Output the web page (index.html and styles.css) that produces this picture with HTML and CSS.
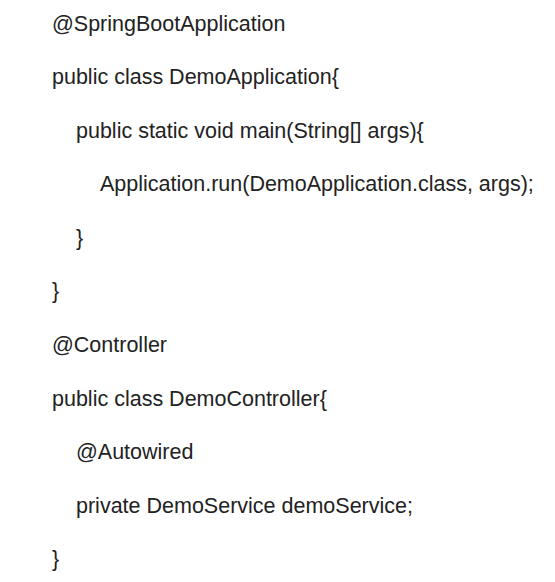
FILE: index.html
```html
<!DOCTYPE html>
<html>
<head>
<meta charset="utf-8">
<link rel="stylesheet" href="styles.css">
</head>
<body>
<div class="code">
  <p class="line l0">@SpringBootApplication</p>
  <p class="line l0">public class DemoApplication{</p>
  <p class="line l1">public static void main(String[] args){</p>
  <p class="line l2">Application.run(DemoApplication.class, args);</p>
  <p class="line l1">}</p>
  <p class="line l0">}</p>
  <p class="line l0">@Controller</p>
  <p class="line l0">public class DemoController{</p>
  <p class="line l1">@Autowired</p>
  <p class="line l1">private DemoService demoService;</p>
  <p class="line l0">}</p>
</div>
</body>
</html>
```
FILE: styles.css
```css
html, body {
  margin: 0;
  padding: 0;
  background: #ffffff;
}
.code {
  display: flex;
  flex-direction: column;
  gap: 29.6px;
  padding: 11.5px 0 0 52px;
  font-family: "Liberation Sans", Arial, sans-serif;
  font-size: 21.5px;
  color: #222222;
}
.line {
  margin: 0;
  height: 24px;
  line-height: 24px;
  white-space: nowrap;
}
.l1 { padding-left: 24px; }
.l2 { padding-left: 48px; }
```
